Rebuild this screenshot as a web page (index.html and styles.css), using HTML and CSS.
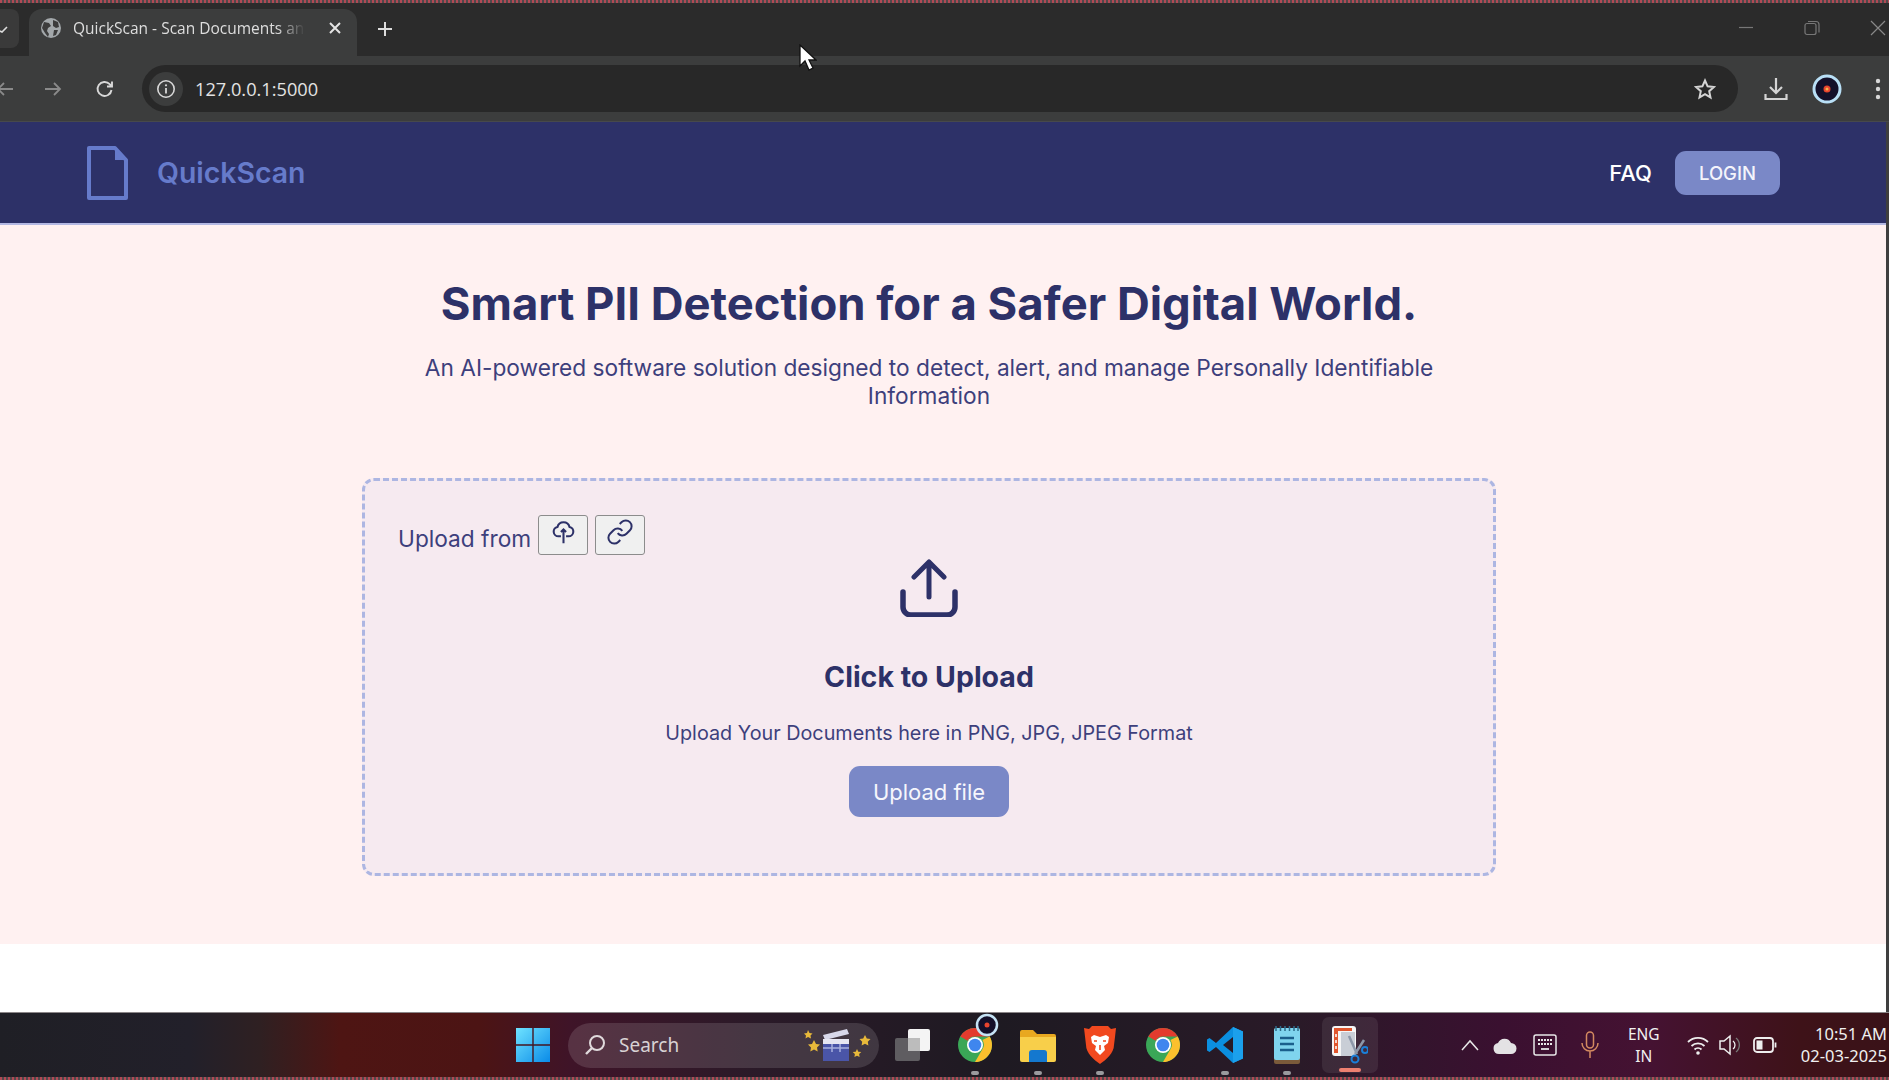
FILE: index.html
```html
<!DOCTYPE html>
<html lang="en">

<head>
    <meta charset="UTF-8" />
    <meta name="viewport" content="width=device-width, initial-scale=1.0" />
    <title>QuickScan - Scan Documents and Images</title>
    <link rel="stylesheet" href="styles.css">
</head>

<body>
    <div class="dots"></div>

    <!-- browser tabs -->
    <div class="tabstrip">
        <div class="tab-stub">
            <svg width="10" height="10" viewBox="0 0 10 10"><path d="M0 7l2 1 5-5" fill="none" stroke="#ddd" stroke-width="1.6"/></svg>
        </div>
        <div class="tab">
            <svg class="favicon" width="20" height="20" viewBox="0 0 20 20">
                <circle cx="10" cy="10" r="10" fill="#a3a8ab"/>
                <path d="M3 4l5 1 2 3-3 2-1 3 2 3-1 3-3-4-3-5zM12 2l5 2 1 5-3 1-3-2zM13 12l4 0-2 5-3 1z" fill="#3c3c3c"/>
            </svg>
            <span class="tab-title">QuickScan - Scan Documents and Images</span>
            <svg class="tab-close" width="12" height="12" viewBox="0 0 12 12"><path d="M1 1l10 10M11 1L1 11" stroke="#e4e4e4" stroke-width="2"/></svg>
        </div>
        <svg class="tab-new" width="16" height="16" viewBox="0 0 16 16"><path d="M8 1v14M1 8h14" stroke="#dcdcdc" stroke-width="2"/></svg>
        <div class="win-controls">
            <svg width="16" height="16" viewBox="0 0 16 16"><path d="M1 7.500h14" stroke="#777" stroke-width="1.200"/></svg>
            <svg width="16" height="16" viewBox="0 0 16 16"><rect x="1" y="3.500" width="11" height="11" rx="2" fill="none" stroke="#777" stroke-width="1.200"/><path d="M4 1.500h8a3 3 0 0 1 3 3v8" fill="none" stroke="#777" stroke-width="1.200"/></svg>
            <svg width="16" height="16" viewBox="0 0 16 16"><path d="M1 1l14 14M15 1L1 15" stroke="#888" stroke-width="1.200"/></svg>
        </div>
    </div>

    <!-- address bar -->
    <div class="toolbar">
        <div class="tool-btn"><svg width="20" height="20" viewBox="0 0 20 20"><path d="M18 10H3M9 4l-6 6 6 6" fill="none" stroke="#8a8a8a" stroke-width="1.800"/></svg></div>
        <div class="tool-btn"><svg width="20" height="20" viewBox="0 0 20 20"><path d="M2 10h15M11 4l6 6-6 6" fill="none" stroke="#8a8a8a" stroke-width="1.800"/></svg></div>
        <div class="tool-btn reload"><svg width="20" height="20" viewBox="0 0 20 20"><path d="M16.500 11a7 7 0 1 1-1.800-5.800L17 7.500M17 2.500v5h-5" fill="none" stroke="#d8d8d8" stroke-width="1.900"/></svg></div>
        <div class="omnibox">
            <div class="site-info">
                <svg width="20" height="20" viewBox="0 0 20 20"><circle cx="10" cy="10" r="8.200" fill="none" stroke="#d8d8d8" stroke-width="1.600"/><path d="M10 9v5.500" stroke="#d8d8d8" stroke-width="1.800"/><circle cx="10" cy="6.300" r="1.100" fill="#d8d8d8"/></svg>
            </div>
            <span class="url">127.0.0.1:5000</span>
            <svg class="star" width="22" height="22" viewBox="0 0 22 22"><path d="M11 2.500l2.600 5.800 6.300.7-4.700 4.200 1.300 6.200L11 16.200l-5.500 3.200 1.300-6.200L2.100 9l6.300-.7z" fill="none" stroke="#d4d4d4" stroke-width="2"/></svg>
        </div>
        <div class="tool-btn download"><svg width="24" height="24" viewBox="0 0 24 24"><path d="M12 1v14M6 10l6 6 6-6" fill="none" stroke="#d4d4d4" stroke-width="2.200"/><path d="M1.500 17v5h21v-5" fill="none" stroke="#d4d4d4" stroke-width="2.200"/></svg></div>
        <div class="tool-btn avatar"><svg width="30" height="30" viewBox="0 0 30 30"><circle cx="15" cy="15" r="13" fill="#14102a" stroke="#b9e0f7" stroke-width="3"/><circle cx="15" cy="15" r="3.500" fill="#e8442e"/><circle cx="15" cy="15" r="1.500" fill="#f8b24a"/></svg></div>
        <div class="tool-btn"><svg width="6" height="22" viewBox="0 0 6 22"><circle cx="3" cy="3" r="2.200" fill="#d8d8d8"/><circle cx="3" cy="11" r="2.200" fill="#d8d8d8"/><circle cx="3" cy="19" r="2.200" fill="#d8d8d8"/></svg></div>
    </div>

    <!-- the page itself -->
    <div class="viewport">
        <div class="page">
            <header class="navbar">
                <svg class="logo" width="43" height="56" viewBox="0 0 43 56"><path d="M3 3h26l11 12v38H3z" fill="none" stroke="#667bcb" stroke-width="4" stroke-linejoin="round"/><path d="M29 3l11 12H29z" fill="#667bcb"/></svg>
                <span class="brand">QuickScan</span>
                <a class="faq">FAQ</a>
                <button class="login">LOGIN</button>
            </header>
            <main class="hero">
                <h1>Smart PII Detection for a Safer Digital World.</h1>
                <p class="tagline">An AI-powered software solution designed to detect, alert, and manage Personally Identifiable Information</p>
                <section class="dropzone">
                    <div class="source">
                        <span>Upload from</span>
                        <button class="source-btn">
                            <svg width="23" height="24" viewBox="0 0 26 28"><path d="M13 27V11M10 14l3-3 3 3" fill="none" stroke="#2d3168" stroke-width="2.400"/><path d="M10 19H7a5.500 5.500 0 0 1-1-10.900 7.200 7.200 0 0 1 14 0A5.500 5.500 0 0 1 19 19h-3" fill="none" stroke="#2d3168" stroke-width="2.400"/></svg>
                        </button>
                        <button class="source-btn">
                            <svg width="28" height="28" viewBox="0 0 24 24"><path d="M10 13a5 5 0 0 0 7.540.54l3-3a5 5 0 0 0-7.070-7.070l-1.720 1.710" fill="none" stroke="#2d3168" stroke-width="1.700"/><path d="M14 11a5 5 0 0 0-7.540-.54l-3 3a5 5 0 0 0 7.070 7.070l1.710-1.710" fill="none" stroke="#2d3168" stroke-width="1.700"/></svg>
                        </button>
                    </div>
                    <svg class="upload-icon" width="58" height="58" viewBox="0 0 58 58"><path d="M29 38V3M14 18L29 3l15 15" fill="none" stroke="#2d3168" stroke-width="5" stroke-linecap="round" stroke-linejoin="round"/><path d="M3 33v15a8 8 0 0 0 8 8h36a8 8 0 0 0 8-8V33" fill="none" stroke="#2d3168" stroke-width="5.500" stroke-linecap="round"/></svg>
                    <h2>Click to Upload</h2>
                    <p class="formats">Upload Your Documents here in PNG, JPG, JPEG Format</p>
                    <button class="upload-btn">Upload file</button>
                </section>
            </main>
            <div class="blank"></div>
        </div>
    </div>

    <!-- windows taskbar -->
    <div class="taskbar">
        <div class="slot">
            <svg width="34" height="34" viewBox="0 0 34 34"><defs><linearGradient id="win" x1="0" y1="0" x2="1" y2="1"><stop offset="0" stop-color="#6fe3ff"/><stop offset="1" stop-color="#0a8be8"/></linearGradient></defs><path d="M0 0h16.300v16.300H0zM17.700 0H34v16.300H17.700zM0 17.700h16.300V34H0zM17.700 17.700H34V34H17.700z" fill="url(#win)"/></svg>
        </div>
        <div class="search">
            <svg width="22" height="22" viewBox="0 0 22 22"><circle cx="13" cy="9" r="7" fill="none" stroke="#e0dadc" stroke-width="2"/><path d="M8 14l-6 6" stroke="#e0dadc" stroke-width="2.400"/></svg>
            <span>Search</span>
            <svg class="clapper" width="70" height="34" viewBox="0 0 70 34">
                <path d="M20 7l24-6 2 5-24 6z" fill="#d8d8ea"/>
                <path d="M20 11h26v5H20z" fill="#e6e6f2"/>
                <path d="M20 16h26v17H20z" fill="#4a55a8"/>
                <path d="M20 20h26M29 16v8M37 16v8" stroke="#a8b0de" stroke-width="1.500"/>
                <path d="M5 2l1.500 3 3 .5-2 2 .5 3-3-1.500-2.500 1.500.5-3-2-2 3-.5zM11 12l2 4 4 .5-3 3 .7 4-3.700-2-3.700 2 .7-4-3-3 4-.5zM62 7l1.800 3.500 3.700.5-2.700 2.700.6 3.800-3.400-1.800-3.400 1.800.6-3.800-2.700-2.700 3.700-.5zM54 21l1.300 2.700 3 .4-2.200 2 .5 3-2.600-1.400-2.600 1.400.5-3-2.200-2 3-.4z" fill="#e8b93a"/>
            </svg>
        </div>
        <div class="apps">
            <div class="slot">
                <svg width="36" height="32" viewBox="0 0 36 32"><rect x="13" y="0" width="22" height="22" rx="2" fill="#f4f4f4"/><rect x="0" y="9" width="25" height="23" rx="2" fill="#6a6a6c" fill-opacity=".85"/><rect x="13" y="9" width="12" height="13" fill="#bcbcbc"/></svg>
            </div>
            <div class="slot running">
                <svg class="chrome" width="36" height="36" viewBox="0 0 36 36"><circle cx="18" cy="18" r="17" fill="#3aa757"/><path d="M18 1a17 17 0 0 1 14.700 8.500H18a8.500 8.500 0 0 0-7.400 4.300L3.300 9.500A17 17 0 0 1 18 1z" fill="#e33b2e"/><path d="M32.700 9.500A17 17 0 0 1 18 35l7.400-12.700A8.500 8.500 0 0 0 25.400 13z" fill="#fbc02d"/><circle cx="18" cy="18" r="8" fill="#fff"/><circle cx="18" cy="18" r="6.300" fill="#3f86ee"/></svg>
                <svg class="profile-badge" width="24" height="24" viewBox="0 0 24 24"><circle cx="12" cy="12" r="10" fill="#14102a" stroke="#c5e3f5" stroke-width="2.500"/><circle cx="12" cy="12" r="2.500" fill="#e8442e"/></svg>
            </div>
            <div class="slot running">
                <svg width="36" height="34" viewBox="0 0 36 34"><path d="M0 4a2 2 0 0 1 2-2h11l4 4h17a2 2 0 0 1 2 2v24H0z" fill="#e8a820"/><path d="M0 9h36v23a2 2 0 0 1-2 2H2a2 2 0 0 1-2-2z" fill="#f8cf4a"/><path d="M9 34v-9a3 3 0 0 1 3-3h12a3 3 0 0 1 3 3v9z" fill="#1478cf"/></svg>
            </div>
            <div class="slot running">
                <svg width="32" height="38" viewBox="0 0 32 38"><path d="M8 0h16l3 3 5-1-1 9-1 8c0 8-8 15-14 19C10 34 2 27 2 19L0 2l5 1z" fill="#f1491f"/><path d="M16 11l6-2 3 2-1 6-4 3 1 4-5 5-5-5 1-4-4-3-1-6 3-2z" fill="#fff"/><path d="M13 15h-3M22 15h-3M16 19v5" stroke="#f1491f" stroke-width="1.600"/></svg>
            </div>
            <div class="slot">
                <svg width="36" height="36" viewBox="0 0 36 36"><circle cx="18" cy="18" r="17" fill="#3aa757"/><path d="M18 1a17 17 0 0 1 14.700 8.500H18a8.500 8.500 0 0 0-7.400 4.300L3.300 9.500A17 17 0 0 1 18 1z" fill="#e33b2e"/><path d="M32.700 9.500A17 17 0 0 1 18 35l7.400-12.700A8.500 8.500 0 0 0 25.400 13z" fill="#fbc02d"/><circle cx="18" cy="18" r="8" fill="#fff"/><circle cx="18" cy="18" r="6.300" fill="#3f86ee"/></svg>
            </div>
            <div class="slot running">
                <svg width="36" height="36" viewBox="0 0 36 36"><path d="M26 0l10 4.500v27L26 36 9 20l-6.500 5L0 23.500v-11L2.500 11 9 16zM26 10l-10 8 10 8z" fill="#0b8fe0"/><path d="M26 0l10 4.500v27L26 36z" fill="#1ba0ec"/></svg>
            </div>
            <div class="slot running">
                <svg width="26" height="38" viewBox="0 0 26 38"><rect x="0" y="2" width="26" height="36" rx="2" fill="#7a5a3a"/><rect x="0" y="2" width="26" height="32" rx="2" fill="#7fd4ee"/><path d="M2 0v5M6.500 0v5M11 0v5M15.500 0v5M20 0v5M24 0v5" stroke="#2d6b8a" stroke-width="1.500"/><path d="M6 12h14M6 18h14M6 24h14" stroke="#1a5f8c" stroke-width="2.500"/></svg>
            </div>
            <div class="slot snip">
                <svg width="36" height="38" viewBox="0 0 36 38"><rect x="0" y="0" width="24" height="30" rx="3" fill="#f6f6f6"/><path d="M2 2h18v3H6v22H2z" fill="#e0552d"/><path d="M4 8v16" stroke="#fff" stroke-width="1.500" stroke-dasharray="3 3"/><rect x="9" y="6" width="14" height="24" fill="#c9ced6"/><path d="M17 10l8 18M32 14l-9 14" stroke="#8c97a8" stroke-width="2.500"/><circle cx="23" cy="33" r="3.500" fill="none" stroke="#1a7fd8" stroke-width="2"/><circle cx="33" cy="24" r="3" fill="none" stroke="#1a7fd8" stroke-width="2"/></svg>
                <span class="snip-bar"></span>
            </div>
        </div>
        <div class="tray">
            <div class="tray-slot chevron"><svg width="18" height="12" viewBox="0 0 18 12"><path d="M1 11l8-9 8 9" fill="none" stroke="#e8e8e8" stroke-width="1.500"/></svg></div>
            <div class="tray-slot cloud"><svg width="24" height="18" viewBox="0 0 24 18"><path d="M6 18a5.500 5.500 0 0 1-1-10.900A7 7 0 0 1 18 7a5.500 5.500 0 0 1 0 11z" fill="#e4e2e4"/></svg></div>
            <div class="tray-slot keyboard"><svg width="24" height="22" viewBox="0 0 24 22"><rect x="1" y="1" width="22" height="20" rx="2" fill="none" stroke="#e8e8e8" stroke-width="1.500"/><path d="M5 6h14M5 10h14" stroke="#e8e8e8" stroke-width="1.800" stroke-dasharray="2 1"/><path d="M8 15h8" stroke="#e8e8e8" stroke-width="1.800"/></svg></div>
            <div class="tray-slot mic"><svg width="18" height="28" viewBox="0 0 18 28"><rect x="5.500" y="1" width="7" height="16" rx="3.500" fill="none" stroke="#d48a60" stroke-width="1.500"/><path d="M1 12a8 8 0 0 0 16 0M9 20v7" fill="none" stroke="#d48a60" stroke-width="1.500"/></svg></div>
            <div class="lang">ENG<br>IN</div>
            <div class="tray-slot wifi"><svg width="22" height="20" viewBox="0 0 22 20"><path d="M1 7a14 14 0 0 1 20 0M4.500 11a9.500 9.500 0 0 1 13 0M7.500 14.500a5 5 0 0 1 7 0" fill="none" stroke="#eee" stroke-width="1.800"/><circle cx="11" cy="18" r="1.800" fill="#eee"/></svg></div>
            <div class="tray-slot volume"><svg width="24" height="22" viewBox="0 0 24 22"><path d="M1 7h4l6-5v18l-6-5H1z" fill="none" stroke="#eee" stroke-width="1.500"/><path d="M14 7a5 5 0 0 1 0 8" fill="none" stroke="#eee" stroke-width="1.300"/><path d="M17 4a9 9 0 0 1 0 14" fill="none" stroke="#777" stroke-width="1.300"/></svg></div>
            <div class="tray-slot battery"><svg width="24" height="16" viewBox="0 0 24 16"><rect x="1" y="1" width="19" height="14" rx="3" fill="none" stroke="#eee" stroke-width="1.800"/><rect x="3.500" y="3.500" width="6" height="9" fill="#eee"/><path d="M22.500 5.500v5" stroke="#eee" stroke-width="1.800"/></svg></div>
            <div class="clock">10:51 AM<br>02-03-2025</div>
        </div>
    </div>
    <div class="dots"></div>

    <svg class="cursor" width="18" height="27" viewBox="0 0 18 27"><path d="M1 1v21l5-5 4 9 4-2-4-8h7z" fill="#fff" stroke="#111" stroke-width="1.300"/></svg>
</body>

</html>
```

FILE: styles.css
```css
body {
    width: 1889px;
    height: 1080px;
    margin: 0;
    display: flex;
    flex-direction: column;
    overflow: hidden;
    font-family: Inter, "Noto Sans", sans-serif;
    background: #2b2b2b;
    position: relative;
}

.dots {
    height: 3px;
    flex: none;
    background: repeating-linear-gradient(90deg, #b04a55 0 2px, #50494b 2px 4px);
}

/* browser chrome */
.tabstrip {
    height: 53px;
    flex: none;
    display: flex;
    align-items: flex-end;
    background: #2b2b2b;
}

.tab-stub {
    width: 19px;
    height: 39px;
    margin-bottom: 8px;
    margin-right: 10px;
    background: #3a3a3a;
    border-radius: 0 8px 8px 0;
    display: flex;
    align-items: center;
}

.tab {
    width: 300px;
    height: 38px;
    padding: 0 16px 9px 12px;
    display: flex;
    align-items: center;
    gap: 12px;
    background: #3c3d3d;
    border-radius: 13px 13px 0 0;
}

.favicon {
    flex: none;
}

.tab-title {
    flex: 1;
    overflow: hidden;
    white-space: nowrap;
    font-family: "Open Sans", sans-serif;
    font-size: 15.500px;
    color: #dedede;
    -webkit-mask-image: linear-gradient(90deg, #000 88%, transparent 100%);
    mask-image: linear-gradient(90deg, #000 88%, transparent 100%);
}

.tab-close {
    flex: none;
    margin-left: 12px;
}

.tab-new {
    margin: 0 0 19px 20px;
}

.win-controls {
    margin-left: auto;
    margin-right: 3px;
    margin-bottom: 20px;
    display: flex;
    gap: 50px;
    align-items: center;
}

.toolbar {
    width: 1930px;
    height: 66px;
    flex: none;
    display: flex;
    align-items: center;
    margin-left: -19px;
    box-sizing: border-box;
    background: #3c3d3d;
    border-bottom: 1px solid #47494b;
}

.tool-btn {
    width: 48px;
    height: 48px;
    flex: none;
    display: flex;
    align-items: center;
    justify-content: center;
}

.reload {
    margin-left: 4px;
}

.download {
    margin-left: 14px;
}

.avatar {
    margin-left: 3px;
}

.avatar + .tool-btn {
    margin-left: 3px;
}

.omnibox {
    width: 1596px;
    height: 47px;
    margin-left: 13px;
    flex: none;
    display: flex;
    align-items: center;
    background: #282828;
    border-radius: 24px;
}

.site-info {
    width: 34px;
    height: 34px;
    margin-left: 7px;
    border-radius: 50%;
    background: #3c3d3d;
    display: flex;
    align-items: center;
    justify-content: center;
}

.url {
    margin-left: 12px;
    font-family: "Open Sans", sans-serif;
    font-size: 18.200px;
    color: #e3e3e3;
}

.star {
    margin-left: auto;
    margin-right: 22px;
}

/* page */
.viewport {
    flex: 1;
    min-height: 0;
    display: flex;
    background: #3f3f3f;
}

.page {
    width: 1886px;
    display: flex;
    flex-direction: column;
    background: #fff;
}

.navbar {
    height: 103px;
    flex: none;
    display: flex;
    align-items: center;
    padding: 0 106px 0 86px;
    box-sizing: border-box;
    background: #2d3168;
    border-bottom: 2px solid #b3b8e3;
}

.brand {
    margin-left: 28px;
    font-size: 28.400px;
    font-weight: 600;
    color: #667bcb;
}

.faq {
    margin-left: auto;
    font-size: 22px;
    font-weight: 500;
    color: #fff;
}

.login {
    width: 105px;
    height: 44px;
    margin-left: 23px;
    border: none;
    border-radius: 11px;
    background: #7a88c7;
    color: #f4f4fb;
    font-family: inherit;
    font-size: 18.500px;
    font-weight: 500;
}

.hero {
    height: 719px;
    flex: none;
    box-sizing: border-box;
    padding: 51px 390px 0 362px;
    display: flex;
    flex-direction: column;
    align-items: center;
    background: #fff1f1;
    color: #2d3168;
}

h1 {
    margin: 0;
    font-size: 45.400px;
    line-height: 56px;
    font-weight: 700;
    white-space: nowrap;
}

.tagline {
    width: 1040px;
    margin: 22px 0 0;
    text-align: center;
    font-size: 22.700px;
    line-height: 28px;
    color: #3d3f7c;
}

.dropzone {
    width: 1134px;
    height: 398px;
    margin-top: 68px;
    box-sizing: border-box;
    flex: none;
    padding: 34px 33px 0;
    display: flex;
    flex-direction: column;
    align-items: center;
    border: 3px dashed #adb6e2;
    border-radius: 12px;
    background: #f6eaf0;
}

.source {
    align-self: flex-start;
    height: 40px;
    display: flex;
    align-items: center;
    gap: 7px;
    font-size: 22.700px;
    color: #3d3f7c;
}

.source span {
    margin-top: 7px;
}

.source-btn {
    width: 50px;
    height: 40px;
    padding: 0 0 6px;
    border: 1.500px solid #8c8c8c;
    border-radius: 3px;
    background: #f0f0f0;
    display: flex;
    align-items: center;
    justify-content: center;
}

.upload-icon {
    margin-top: 4px;
}

h2 {
    margin: 43px 0 0;
    font-size: 28.500px;
    line-height: 34px;
    font-weight: 700;
}

.formats {
    margin: 27px 0 0;
    font-size: 19.800px;
    line-height: 24px;
    color: #3d3f7c;
}

.upload-btn {
    width: 160px;
    height: 51px;
    margin-top: 21px;
    border: none;
    border-radius: 11px;
    background: #7a88c7;
    color: #f6f6fc;
    font-family: inherit;
    font-size: 22px;
}

.blank {
    flex: 1;
    background: #fff;
}

/* taskbar */
.taskbar {
    height: 65px;
    flex: none;
    display: flex;
    align-items: center;
    padding-left: 505px;
    box-sizing: border-box;
    border-top: 1px solid #8a8587;
    background: linear-gradient(90deg, #1f1f25 0, #22202a 190px, #2f2022 260px, #4e1513 340px, #4c1414 480px, #3f1428 570px, #2a1a28 760px, #1e1a22 1000px, #2a1a28 1300px, #3a1030 1500px, #451232 1650px, #3e1218 1800px, #3a1218 1889px);
}

.slot {
    width: 56px;
    height: 56px;
    flex: none;
    display: flex;
    align-items: center;
    justify-content: center;
    position: relative;
}

.running::after {
    content: "";
    position: absolute;
    bottom: -2px;
    left: 24px;
    width: 8px;
    height: 4px;
    border-radius: 2px;
    background: #9a9a9e;
}

.search {
    width: 311px;
    height: 45px;
    margin-left: 7px;
    flex: none;
    display: flex;
    align-items: center;
    padding-left: 16px;
    box-sizing: border-box;
    border-radius: 23px;
    background: rgba(255, 255, 255, 0.13);
    font-family: "Noto Sans", sans-serif;
    font-size: 19px;
    color: #d8d2d4;
}

.search span {
    margin-left: 13px;
}

.clapper {
    margin-left: auto;
    margin-right: 6px;
}

.apps {
    display: flex;
    gap: 6.400px;
    margin-left: 6px;
}

.profile-badge {
    position: absolute;
    top: -4px;
    right: 4px;
}

.snip {
    border-radius: 7px;
    background: rgba(255, 255, 255, 0.08);
}

.snip-bar {
    position: absolute;
    bottom: 1px;
    left: 17px;
    width: 22px;
    height: 4px;
    border-radius: 2px;
    background: #ee8070;
}

.tray {
    display: flex;
    align-items: center;
    flex: 1;
    margin-left: 74px;
    color: #f0f0f0;
    font-family: "Noto Sans", sans-serif;
}

.tray-slot {
    display: flex;
    justify-content: center;
    flex: none;
}

.chevron {
    width: 36px;
}

.cloud {
    width: 34px;
}

.keyboard {
    width: 46px;
}

.mic {
    width: 44px;
}

.lang {
    width: 64px;
    margin-right: 4px;
    text-align: center;
    font-size: 15.500px;
    line-height: 22px;
}

.wifi {
    width: 36px;
}

.volume {
    width: 30px;
}

.battery {
    width: 38px;
}

.clock {
    flex: 1;
    padding-right: 2px;
    text-align: right;
    font-size: 16.500px;
    line-height: 22px;
}

.cursor {
    position: absolute;
    left: 799px;
    top: 44px;
}
```
